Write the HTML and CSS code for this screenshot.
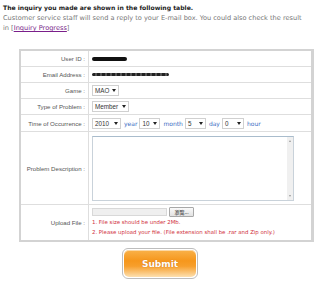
FILE: index.html
```html
<!DOCTYPE html>
<html>
<head>
<meta charset="utf-8">
<link rel="stylesheet" href="styles.css">
</head>
<body>
<div class="intro">
  <p class="lead">The inquiry you made are shown in the following table.</p>
  <p class="note">Customer service staff will send a reply to your E-mail box. You could also check the result<br>in [<a href="#" class="link">Inquiry Progress</a>]</p>
</div>
<div class="form">
  <div class="row r-s">
    <div class="label">User ID :</div>
    <div class="value"><span class="redact redact-short"></span></div>
  </div>
  <div class="row r-s">
    <div class="label">Email Address :</div>
    <div class="value"><span class="redact redact-long"></span></div>
  </div>
  <div class="row r-s">
    <div class="label">Game :</div>
    <div class="value"><span class="sel w-mao">MAO</span></div>
  </div>
  <div class="row r-s">
    <div class="label">Type of Problem :</div>
    <div class="value"><span class="sel w-member">Member</span></div>
  </div>
  <div class="row r-t">
    <div class="label">Time of Occurrence :</div>
    <div class="value time">
      <span class="sel w-year">2010</span><span class="unit">year</span>
      <span class="sel w-2">10</span><span class="unit">month</span>
      <span class="sel w-2">5</span><span class="unit">day</span>
      <span class="sel w-h">0</span><span class="unit">hour</span>
    </div>
  </div>
  <div class="row r-d">
    <div class="label">Problem Description :</div>
    <div class="value top">
      <div class="textarea"><div class="scroll"><span class="arr up"></span><span class="arr down"></span></div></div>
    </div>
  </div>
  <div class="row r-u">
    <div class="label">Upload File :</div>
    <div class="value upload">
      <div class="file"><span class="file-field"></span><span class="file-btn">瀏覽...</span></div>
      <p class="hint">1. File size should be under 2Mb.</p>
      <p class="hint">2. Please upload your file. (File extension shall be .rar and Zip only.)</p>
    </div>
  </div>
</div>
<div class="actions">
  <button class="submit" type="button"><span class="submit-face">Submit</span></button>
</div>
</body>
</html>
```

FILE: styles.css
```css
html, body { margin: 0; padding: 0; background: #fff; }
body { font-family: "DejaVu Sans", Verdana, sans-serif; }

.intro { padding: 3px 0 0 3px; }
.intro p { margin: 0; line-height: 10px; }
.lead { font-size: 6.1px; font-weight: bold; color: #1a1a1a; }
.note { font-size: 6.6px; color: #777; }
.link { color: #7a1f8a; text-decoration: underline; }

.form {
  margin: 16px 0 0 19px;
  width: 290px;
  border: 2px solid #d3d3d3;
  border-right-width: 3px;
}
.row { display: flex; box-sizing: border-box; border-bottom: 1px solid #dedede; }
.row:last-child { border-bottom: 0; }
.r-s { height: 16px; }
.r-t { height: 17px; }
.r-d { height: 73px; }
.r-u { height: 35px; }

.label {
  width: 68px;
  flex: none;
  box-sizing: border-box;
  border-right: 1px solid #dedede;
  padding-right: 3px;
  display: flex;
  align-items: center;
  justify-content: flex-end;
  font-family: "Liberation Sans", Arial, sans-serif;
  font-size: 6.1px;
  color: #555;
  white-space: nowrap;
}
.value { flex: 1; display: flex; align-items: center; padding-left: 3px; }
.value.top { align-items: flex-start; padding-top: 4px; }

.redact { display: inline-block; border-radius: 3px; filter: blur(0.6px); }
.redact-short { width: 35px; height: 4px; background: #111; }
.redact-long { width: 77px; height: 3px; background: repeating-linear-gradient(90deg, #222 0 3px, #555 3px 5px); }

.sel {
  display: inline-flex;
  align-items: center;
  justify-content: space-between;
  box-sizing: border-box;
  height: 11px;
  padding: 0 2px 0 2px;
  border: 1px solid #d0d0d0;
  background: #fff;
  font-family: "Liberation Sans", Arial, sans-serif;
  font-size: 6.3px;
  color: #333;
}
.sel::after {
  content: "";
  border-left: 2px solid transparent;
  border-right: 2px solid transparent;
  border-top: 3px solid #222;
}
.w-mao { width: 27px; }
.w-member { width: 37px; }
.w-year { width: 29px; }
.w-2 { width: 21px; }
.w-h { width: 22px; }

.time .sel { margin-right: 3px; }
.unit { font-size: 6px; color: #3d6fc4; margin-right: 2px; }

.textarea {
  width: 202px;
  height: 65px;
  box-sizing: border-box;
  border: 1px solid #c9d2da;
  border-top-color: #a9bccc;
  background: #fff;
  display: flex;
  justify-content: flex-end;
}
.scroll {
  width: 6px;
  background: #f0f0f0;
  display: flex;
  flex-direction: column;
  justify-content: space-between;
  align-items: center;
  padding: 3px 0;
}
.arr { width: 0; height: 0; border-left: 1.5px solid transparent; border-right: 1.5px solid transparent; }
.arr.up { border-bottom: 2px solid #999; }
.arr.down { border-top: 2px solid #999; }

.value.upload { flex-direction: column; align-items: flex-start; justify-content: flex-start; padding-top: 2px; }
.file { display: flex; align-items: center; gap: 2px; height: 10px; }
.file-field { width: 75px; height: 8px; background: #efefef; border: 1px solid #d8d8d8; box-sizing: border-box; }
.file-btn {
  width: 25px; height: 10px; box-sizing: border-box;
  border: 1px solid #a8a8a8; border-radius: 1px;
  background: linear-gradient(#fafafa, #e2e2e2);
  font-family: "Noto Sans CJK TC", "Noto Sans", sans-serif;
  font-size: 5px; line-height: 8px; text-align: center; color: #333;
}
.hint { margin: 0; font-size: 5.4px; line-height: 10px; color: #d0303c; white-space: nowrap; }

.actions { display: flex; justify-content: center; padding: 6px 0 0 0; }
.submit {
  width: 76px; height: 31px; box-sizing: border-box;
  padding: 1px; margin: 0;
  border: 1px solid #bdbdbd; border-radius: 6px;
  background: #fff; cursor: pointer;
}
.submit-face {
  display: flex; align-items: center; justify-content: center;
  height: 100%;
  border-radius: 5px;
  background: linear-gradient(#f9b24a 0%, #f6971c 40%, #f79f2c 60%, #fde0b0 100%);
  box-shadow: inset 0 1px 0 rgba(255,255,255,0.5);
  font-family: "DejaVu Sans", Verdana, sans-serif;
  font-weight: bold; font-size: 9px; color: #fff;
  text-shadow: 0 0 1px #c0641a;
}
```
